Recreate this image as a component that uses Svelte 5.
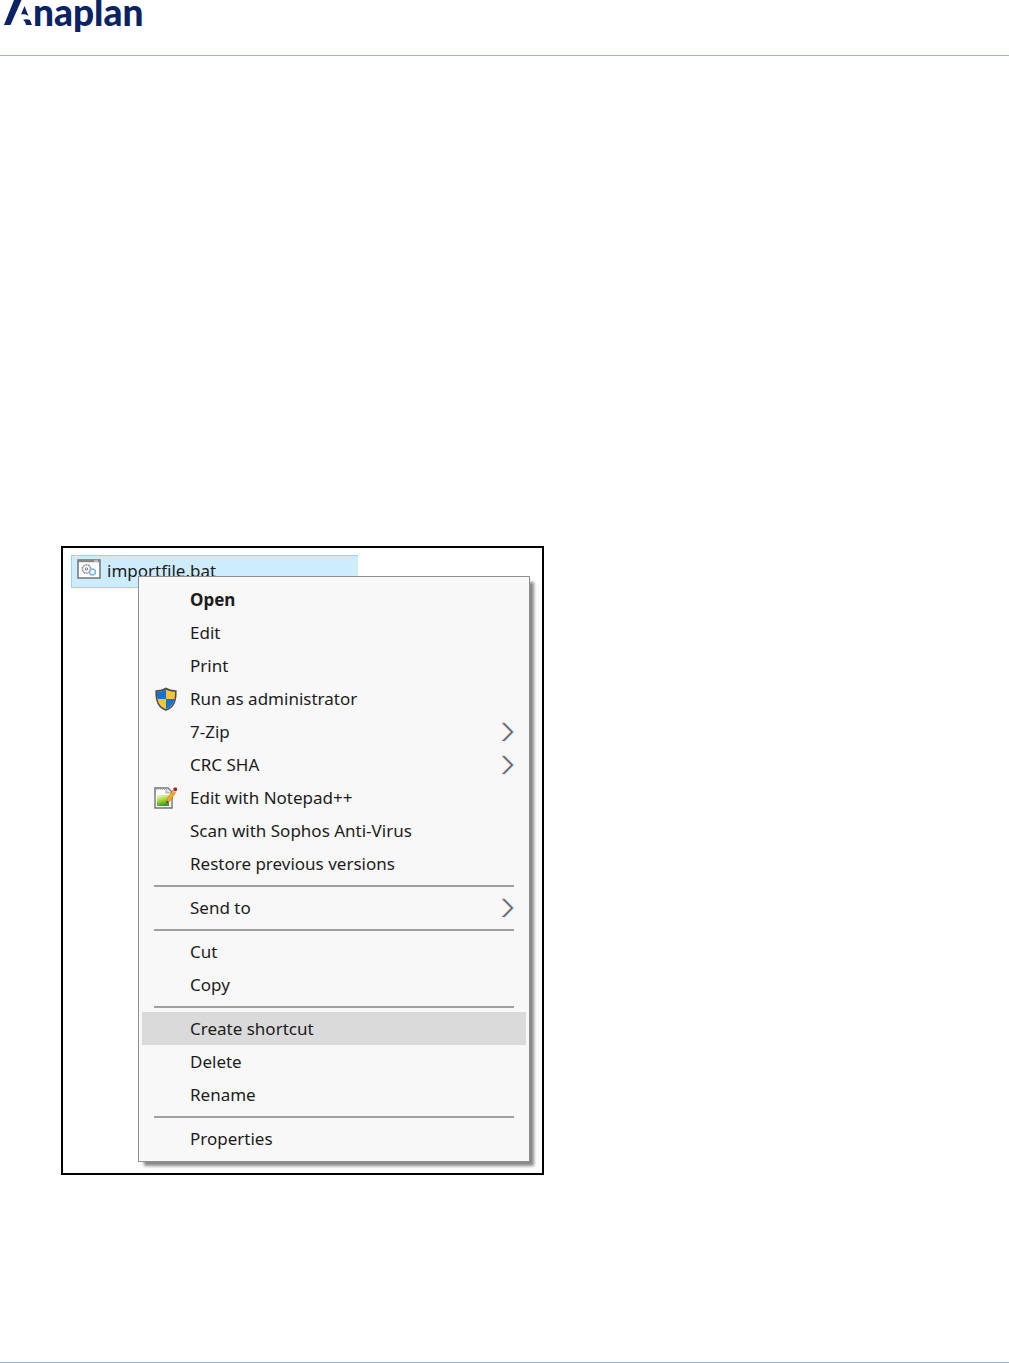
<script lang="ts">
  interface MenuItem {
    label: string
    icon?: 'shield' | 'notepad'
    submenu?: boolean
    bold?: boolean
  }

  const fileName = 'importfile.bat'

  // Each group is followed by a separator
  const groups: MenuItem[][] = [
    [
      { label: 'Open', bold: true },
      { label: 'Edit' },
      { label: 'Print' },
      { label: 'Run as administrator', icon: 'shield' },
      { label: '7-Zip', submenu: true },
      { label: 'CRC SHA', submenu: true },
      { label: 'Edit with Notepad++', icon: 'notepad' },
      { label: 'Scan with Sophos Anti-Virus' },
      { label: 'Restore previous versions' }
    ],
    [{ label: 'Send to', submenu: true }],
    [{ label: 'Cut' }, { label: 'Copy' }],
    [{ label: 'Create shortcut' }, { label: 'Delete' }, { label: 'Rename' }],
    [{ label: 'Properties' }]
  ]

  let active = $state('Create shortcut')
</script>

<div class="page">
  <header class="header">
    <div class="logo">
      <svg class="logo-mark" width="33" height="25" viewBox="0 0 33 25" aria-hidden="true">
        <path d="M14 0H21.500L10.500 25H4Z" />
        <path d="M24.500 6L28.500 16C26.500 14.300 23.500 13.800 21 14.500Z" />
        <path d="M23 19.800C25.500 18.800 28 19 30 20L32 25H26C25.500 22.500 24.500 21 23 19.800Z" />
      </svg>
      <span class="logo-text">naplan</span>
    </div>
  </header>

  <main class="content">
    <div class="figure">
      <div class="file">
        <svg class="file-icon" width="24" height="20" viewBox="0 0 24 20" aria-hidden="true">
          <rect x="1" y="1" width="22" height="18" fill="#fff" stroke="#7b7b7b" stroke-width="1.600" />
          <path d="M1 2H23" stroke="#868686" stroke-width="2.500" />
          <path d="M17 2H21" stroke="#e8e8e8" stroke-width="1" />
          <circle cx="9.500" cy="10" r="4.200" fill="none" stroke="#8e9499" stroke-width="1.600" stroke-dasharray="2 0.600" />
          <circle cx="9.500" cy="10" r="1.200" fill="none" stroke="#777" />
          <circle cx="15.500" cy="13" r="3" fill="#e8f5fc" stroke="#83b5d5" stroke-width="1.500" />
        </svg>
        <span>{fileName}</span>
      </div>

      <div class="menu" role="menu" aria-label={fileName}>
        {#each groups as group, g}
          {#if g > 0}
            <div class="separator" role="separator"></div>
          {/if}
          {#each group as item}
            <button
              type="button"
              role="menuitem"
              class="item"
              class:item--active={item.label === active}
              class:item--bold={item.bold}
              aria-haspopup={item.submenu ? 'menu' : undefined}
              onmouseenter={() => (active = item.label)}
            >
              <span class="item-icon">
                {#if item.icon === 'shield'}
                  <svg width="24" height="24" viewBox="0 0 24 24" aria-hidden="true">
                    <clipPath id="shield"><path d="M13 2.500C15.500 4 18.500 4.700 22 4.800C22.300 14 20 19 13 22C6 19 3.700 14 4 4.800C7.500 4.700 10.500 4 13 2.500Z" /></clipPath>
                    <g clip-path="url(#shield)">
                      <rect width="13" height="12" fill="#1671d4" />
                      <rect x="13" width="11" height="12" fill="#fdc62f" />
                      <rect y="12" width="13" height="12" fill="#fdc62f" />
                      <rect x="13" y="12" width="11" height="12" fill="#1671d4" />
                    </g>
                    <path d="M13 1.500C15.500 3.200 19 4 22.800 4C23.100 14.500 20.500 20 13 23C5.500 20 2.900 14.500 3.200 4C7 4 10.500 3.200 13 1.500Z" fill="none" stroke="#4c4e50" stroke-width="1.600" />
                  </svg>
                {:else if item.icon === 'notepad'}
                  <svg width="24" height="24" viewBox="0 0 24 24" aria-hidden="true">
                    <defs>
                      <linearGradient id="note" x1="0" y1="0" x2="0.300" y2="1">
                        <stop offset="0" stop-color="#f2f8dc" />
                        <stop offset="0.500" stop-color="#a7dc45" />
                        <stop offset="1" stop-color="#3c9f21" />
                      </linearGradient>
                    </defs>
                    <path d="M2 2H15L19 6V22H2Z" fill="#fbfbfb" stroke="#737373" stroke-width="1.400" />
                    <path d="M3 3H12" stroke="#999" stroke-width="1.500" stroke-dasharray="1 1" />
                    <path d="M13 2V7H18" fill="#ddd" stroke="#a9a9a9" />
                    <rect x="4" y="9" width="12" height="11" fill="url(#note)" />
                    <path d="M13 18L14 13L20 4L23 6L17 15Z" fill="#f5a52b" stroke="#c77b1d" stroke-width="0.600" />
                    <path d="M13 18L14 14.500L16 16Z" fill="#554630" />
                    <path d="M20 4L23 6" stroke="#c9d0d4" stroke-width="2" />
                    <rect x="20.500" y="1.500" width="3.500" height="3.500" rx="1" fill="#a81e28" />
                  </svg>
                {/if}
              </span>
              <span class="item-label">{item.label}</span>
              {#if item.submenu}
                <svg class="chevron" width="12" height="20" viewBox="0 0 12 20" fill="none" aria-hidden="true">
                  <path d="M0.300 1L9.300 10L0.300 19" stroke="#e58a4c" stroke-width="1.300" />
                  <path d="M2 1L11 10L2 19" stroke="#4aa3dc" stroke-width="1.300" />
                  <path d="M1.100 1L10.100 10L1.100 19" stroke="#5a2c48" stroke-width="0.800" />
                </svg>
              {/if}
            </button>
          {/each}
        {/each}
      </div>
    </div>
  </main>

  <footer class="footer"></footer>
</div>

<style>
  :global(body) {
    margin: 0;
    background: #fff;
  }

  .page {
    display: flex;
    flex-direction: column;
    min-height: 100vh;
    font-family: 'Noto Sans', 'Open Sans', sans-serif;
    font-size: 17px;
    color: #1c1c1c;
  }

  .header {
    height: 55px;
    border-bottom: 1px solid #a0b4d2;
  }

  .logo {
    display: flex;
    color: #0b2265;
    line-height: 24px;
  }

  .logo-mark {
    fill: currentColor;
  }

  .logo-text {
    font-family: Lato, sans-serif;
    font-size: 37px;
    font-weight: 900;
  }

  .content {
    flex: 1;
    padding: 490px 61px 0;
  }

  .figure {
    box-sizing: border-box;
    max-width: 483px;
    padding: 7px 12px 11px 8px;
    border: 2px solid #000;
  }

  .file {
    display: flex;
    align-items: flex-start;
    gap: 6px;
    box-sizing: border-box;
    width: 287px;
    height: 33px;
    padding: 3px 5px;
    border: 1px solid #99d1ff;
    border-right: 0;
    background: #cdecfe;
    line-height: 24px;
  }

  /* Opens over the lower part of the selected file */
  .menu {
    position: relative;
    margin: -12px 0 0 67px;
    padding: 6px 3px;
    border: 1px solid #8f8f8f;
    background: #f8f8f8;
    box-shadow: 5px 5px 3px -1px #888;
  }

  .item {
    display: flex;
    align-items: center;
    width: 100%;
    height: 33px;
    padding: 0 12px 0 11px;
    border: 0;
    background: none;
    color: inherit;
    font: inherit;
    text-align: left;
  }

  .item--active {
    background: #dadada;
  }

  .item--bold {
    font-weight: 700;
  }

  .item-icon {
    display: flex;
    width: 37px;
  }

  .item-label {
    flex: 1;
    white-space: nowrap;
  }

  .separator {
    height: 2px;
    margin: 5px 12px 4px;
    background: #a0a0a0;
  }

  .footer {
    border-top: 1px solid #8fb0de;
  }
</style>
